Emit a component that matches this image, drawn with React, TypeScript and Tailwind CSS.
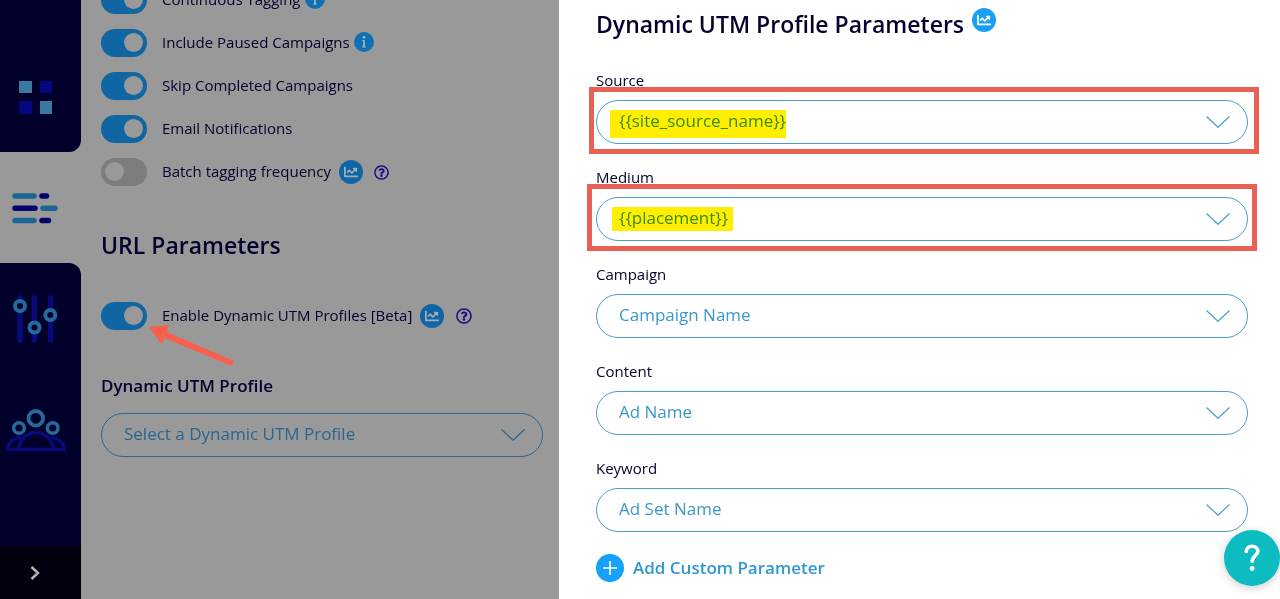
import { useState } from "react";
import { FaChartLine, FaRegQuestionCircle } from "react-icons/fa";

const toggles = [
  { id: "continuous", label: "Continuous Tagging", on: true, info: true },
  { id: "paused", label: "Include Paused Campaigns", on: true, info: true },
  { id: "completed", label: "Skip Completed Campaigns", on: true },
  { id: "email", label: "Email Notifications", on: true },
  { id: "batch", label: "Batch tagging frequency", on: false, chart: true },
];

const fields = [
  {
    id: "source",
    label: "Source",
    value: "{{site_source_name}}",
    frame: "-left-[7px] -right-[11px]",
    marker: "left-[14px] w-44 h-7",
  },
  {
    id: "medium",
    label: "Medium",
    value: "{{placement}}",
    frame: "-left-[9px] -right-[9px]",
    marker: "left-4 w-[121px] h-6",
  },
  { id: "campaign", label: "Campaign", value: "Campaign Name" },
  { id: "content", label: "Content", value: "Ad Name" },
  { id: "keyword", label: "Keyword", value: "Ad Set Name" },
];

const InfoIcon = () => (
  <svg viewBox="0 0 20 20" className="w-5 h-5 shrink-0">
    <circle cx="10" cy="10" r="10" fill="#0f70b4" />
    <circle cx="10" cy="5.3" r="1.4" fill="#a9b4bd" />
    <path d="M10 8.2v7" fill="none" stroke="#a9b4bd" strokeWidth="1.8" />
    <path d="M8.4 8.6h1.6M8.2 15h3.6" fill="none" stroke="#a9b4bd" strokeWidth="0.9" />
  </svg>
);

const ChartBadge = ({ dim }: { dim?: boolean }) => (
  <span
    className={`flex items-center justify-center w-6 h-6 rounded-full shrink-0 ${
      dim ? "bg-[#0f66a5] text-[#a3adb5]" : "bg-[#18a0f5] text-white"
    }`}
  >
    <FaChartLine size={14} />
  </span>
);

const Toggle = ({ id, label, on }: { id: string; label: string; on: boolean }) => {
  const [checked, setChecked] = useState(on);

  return (
    <>
      <input
        id={id}
        type="checkbox"
        role="switch"
        checked={checked}
        onChange={() => setChecked(!checked)}
        className="appearance-none w-[46px] h-7 shrink-0 rounded-full bg-[#7d7d80] checked:bg-[#1065a3] before:block before:w-[19px] before:h-[19px] before:mt-[4px] before:ml-[4px] before:rounded-full before:bg-[#999] checked:before:ml-[23px]"
      />
      <label htmlFor={id} className="ml-[15px] -mt-0.5 text-[15px] leading-6 whitespace-nowrap">
        {label}
      </label>
    </>
  );
};

const PillSelect = ({ id, value, dim }: { id: string; value: string; dim?: boolean }) => (
  <>
    <select
      id={id}
      className={`appearance-none block w-full h-11 rounded-full border pl-[22px] pr-16 pb-0.5 text-[17px] bg-transparent ${
        dim ? "border-[#2a6690] text-[#2a6690]" : "border-[#4a9fca] text-[#3a97cb]"
      }`}
    >
      <option>{value}</option>
    </select>
    <svg
      viewBox="0 0 24 12"
      className={`absolute right-[18px] top-4 w-6 h-3 pointer-events-none ${
        dim ? "text-[#2a6690]" : "text-[#4a9fca]"
      }`}
    >
      <path d="M0.5 0.5L12 11.3L23.5 0.5" fill="none" stroke="currentColor" strokeWidth="1.2" />
    </svg>
  </>
);

const Sidebar = () => (
  <nav className="flex flex-col w-[81px] shrink-0 bg-[#999]">
    <a href="#dashboard" aria-label="Dashboard" className="flex items-end h-[152px] pb-[31px] rounded-br-xl bg-[#00002b]">
      <svg viewBox="0 0 72 48" className="w-[72px] h-12">
        <path d="M19 8h13v12H19zM40 28h12v13H40z" fill="#3a7aa0" />
        <path d="M40 8h12v12H40zM19 28h13v13H19z" fill="#04077f" />
      </svg>
    </a>
    <a href="#tagging" aria-label="Tagging" className="flex items-center h-[111px]">
      <svg viewBox="0 0 72 48" className="w-[72px] h-12" fill="none" strokeWidth="5.5" strokeLinecap="round">
        <path d="M15 12h19M43 24.3h12M15 36.5h19" stroke="#1c6592" />
        <path d="M42 12h4.5M15 24.3h20M42 36.5h6.5" stroke="#04046c" />
      </svg>
    </a>
    <div className="flex flex-col flex-1 pt-8 rounded-tr-xl bg-[#00002b]">
      <a href="#settings" aria-label="Settings">
        <svg viewBox="0 0 72 48" className="w-[72px] h-12" fill="none">
          <path
            d="M20 2.5v43M34.5 2.5v43M50.7 2.5v43"
            stroke="#070a78"
            strokeWidth="5.5"
            strokeLinecap="round"
          />
          <g fill="#00002b" stroke="#246b9b" strokeWidth="4">
            <circle cx="20" cy="11" r="5" />
            <circle cx="34.5" cy="32.5" r="5" />
            <circle cx="50.3" cy="20" r="5" />
          </g>
        </svg>
      </a>
      <a href="#audience" aria-label="Audience" className="mt-[63px]">
        <svg viewBox="0 0 72 48" className="w-[72px] h-12" fill="none">
          <g stroke="#070a78" strokeWidth="3.5" strokeLinejoin="round">
            <path d="M18.5 43.5C19.5 34 27 26.5 36 26.5S52.5 34 53.5 43.5" />
            <path d="M21.5 31.5C14 31.5 8 37 7.5 43.5H64.5C64 37 58 31.5 50.5 31.5" />
          </g>
          <g fill="#00002b" stroke="#246b9b">
            <circle cx="19" cy="22" r="5.3" strokeWidth="3.5" />
            <circle cx="35.8" cy="12.3" r="7.3" strokeWidth="3.8" />
            <circle cx="52.7" cy="22" r="5.3" strokeWidth="3.5" />
          </g>
        </svg>
      </a>
    </div>
    <button type="button" aria-label="Expand menu" className="h-[53px] pl-[30px] bg-[#02000f]">
      <svg viewBox="0 0 10 14" className="w-2.5 h-3.5">
        <path d="M1.5 1L8 7L1.5 13" fill="none" stroke="#b5b5b5" strokeWidth="2.4" />
      </svg>
    </button>
  </nav>
);

const App = () => {
  return (
    <div
      className="grid grid-cols-[559fr_721fr] h-screen overflow-hidden bg-white text-[#04022e]"
      style={{ fontFamily: '"Open Sans", "Noto Sans", sans-serif' }}
    >
      {/* Dimmed settings page */}
      <div className="flex bg-[#999] overflow-hidden">
        <Sidebar />
        <main className="flex-1 pl-5 pr-4 -mt-3.5">
          <div className="flex flex-col gap-[15px]">
            {toggles.map((item) => (
              <div key={item.id} className="flex items-center h-7">
                <Toggle id={item.id} label={item.label} on={item.on} />
                {item.info && (
                  <span className="ml-1 -mt-0.5">
                    <InfoIcon />
                  </span>
                )}
                {item.chart && (
                  <div className="flex items-center gap-[11px] ml-2">
                    <ChartBadge dim />
                    <FaRegQuestionCircle size={15} color="#160a86" />
                  </div>
                )}
              </div>
            ))}
          </div>

          <h2 className="mt-[43px] text-[23px] leading-8 font-semibold">URL Parameters</h2>

          <div className="relative flex items-center h-7 mt-[41px]">
            <Toggle id="dynamic" label="Enable Dynamic UTM Profiles [Beta]" on />
            <div className="flex items-center gap-3 ml-2">
              <ChartBadge dim />
              <FaRegQuestionCircle size={16} color="#160a86" />
            </div>
            {/* Arrow pointing at the switch */}
            <svg viewBox="0 0 86 42" className="absolute left-12 top-[23px] w-[86px] h-[42px] pointer-events-none">
              <path d="M0 2L20 0L17.5 7L85 36L83 41L15.5 13L12.5 19Z" fill="#fa5f4e" />
            </svg>
          </div>

          <label htmlFor="profile" className="block mt-11 text-[17px] leading-6 font-semibold">
            Dynamic UTM Profile
          </label>
          <div className="relative mt-[15px]">
            <PillSelect id="profile" value="Select a Dynamic UTM Profile" dim />
          </div>
        </main>
      </div>

      {/* Parameters panel */}
      <section className="pl-[37px] pr-8 pt-2">
        <div className="flex items-start gap-2">
          <h2 className="text-[23px] leading-8 font-semibold whitespace-nowrap">Dynamic UTM Profile Parameters</h2>
          <ChartBadge />
        </div>

        <div className="flex flex-col gap-[21px] mt-7">
          {fields.map((field) => (
            <div key={field.id}>
              <label htmlFor={field.id} className="block text-[15px] leading-6">
                {field.label}
              </label>
              <div className="relative mt-2">
                <PillSelect id={field.id} value={field.value} />
                {field.marker && (
                  <div
                    className={`absolute top-[10px] bg-[#ffee00] mix-blend-multiply pointer-events-none ${field.marker}`}
                  ></div>
                )}
                {field.frame && (
                  <div
                    className={`absolute -top-[13px] -bottom-[10px] border-[5px] border-[#e85f54] pointer-events-none ${field.frame}`}
                  ></div>
                )}
              </div>
            </div>
          ))}
        </div>

        <button type="button" className="flex items-center gap-[9px] mt-[22px] text-[#2f98d3]">
          <svg viewBox="0 0 28 28" className="w-7 h-7">
            <circle cx="14" cy="14" r="14" fill="#18a0fb" />
            <path d="M14 7v14M7 14h14" stroke="#fff" strokeWidth="1.6" />
          </svg>
          <span className="text-[17px] leading-6 font-semibold">Add Custom Parameter</span>
        </button>
      </section>

      <button
        type="button"
        aria-label="Help"
        className="fixed right-0 bottom-[13px] flex items-center justify-center w-14 h-14 rounded-full bg-[#0cbcc1] shadow-[0_2px_10px_rgba(0,0,0,0.2)]"
      >
        <svg viewBox="0 0 16 28" className="w-4 h-7">
          <path
            d="M2.2 7.5C2.5 4.3 4.8 2.2 8 2.2S13.8 4.3 13.8 7.3C13.8 11.5 8.2 11.8 8.2 17.5"
            fill="none"
            stroke="#fff"
            strokeWidth="3.6"
            strokeLinecap="round"
          />
          <circle cx="8.2" cy="24.5" r="2.4" fill="#fff" />
        </svg>
      </button>
    </div>
  );
};

export default App;
